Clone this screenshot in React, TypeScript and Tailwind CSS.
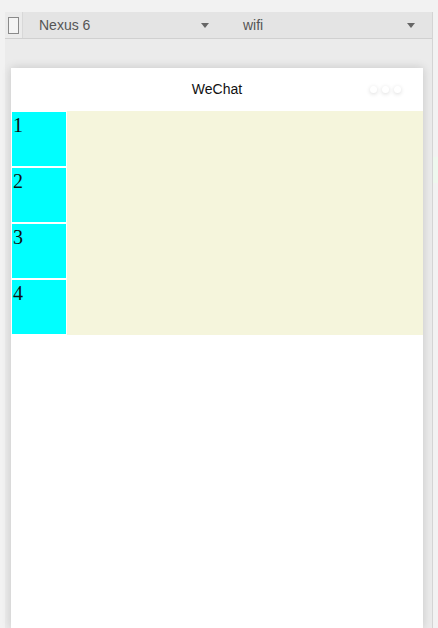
const Arrow = () => (
  <svg width="8" height="5" viewBox="0 0 8 5" className="shrink-0">
    <path d="M0 0 L8 0 L4 5 Z" fill="#666" />
  </svg>
);

const App = () => {
  const items = ["1", "2", "3", "4"];
  return (
    <div className="w-[438px] h-[628px] overflow-hidden bg-[#f2f2f2] pt-3 flex font-['Liberation_Sans',Arial,sans-serif]">
      <div className="ml-[5px] w-[428px] h-full flex flex-col border-r border-[#d4d4d4] bg-[#ebebeb]">
        {/* toolbar */}
        <div className="h-[27px] flex items-center bg-[#e4e4e4] border-b border-[#d0d0d0] shrink-0">
          <div className="w-[18px] h-full flex items-center justify-center bg-[#ebebeb] border-r border-[#d8d8d8]">
            <div className="w-[11px] h-[17px] border border-[#8a8a8a] bg-[#f4f4f4]" />
          </div>
          <div className="flex items-center w-[190px] pl-[16px] pr-[4px]">
            <span className="flex-1 text-[14px] text-[#555]">Nexus 6</span>
            <Arrow />
          </div>
          <div className="flex items-center flex-1 pl-[30px] pr-[17px]">
            <span className="flex-1 text-[14px] text-[#555]">wifi</span>
            <Arrow />
          </div>
        </div>

        {/* phone */}
        <div className="ml-[6px] mt-[29px] w-[412px] flex-1 bg-white shadow-[0_0_9px_rgba(0,0,0,0.16)] flex flex-col">
          <div className="h-[43px] relative flex items-center justify-center">
            <span className="text-[14px] text-[#111]">WeChat</span>
            <div className="absolute right-[22px] top-[18px] flex gap-[5px]">
              <span className="w-[7px] h-[7px] rounded-full bg-white shadow-[0_1px_4px_rgba(0,0,0,0.15)]" />
              <span className="w-[7px] h-[7px] rounded-full bg-white shadow-[0_1px_4px_rgba(0,0,0,0.15)]" />
              <span className="w-[7px] h-[7px] rounded-full bg-white shadow-[0_1px_4px_rgba(0,0,0,0.15)]" />
            </div>
          </div>
          <div className="flex bg-[#f5f5dc]">
            <div className="flex flex-col">
              {items.map((n) => (
                <div
                  key={n}
                  className="w-[56px] h-[56px] border border-white bg-[#00ffff] text-[20px] leading-[24px] text-[#111] font-['Liberation_Serif',serif] pl-[1px] pt-[1px]"
                >
                  {n}
                </div>
              ))}
            </div>
          </div>
        </div>
      </div>
      <div className="flex-1">
        <div className="mt-[145px] h-[26px] bg-[#eef8ee]" />
      </div>
    </div>
  );
};

export default App;
